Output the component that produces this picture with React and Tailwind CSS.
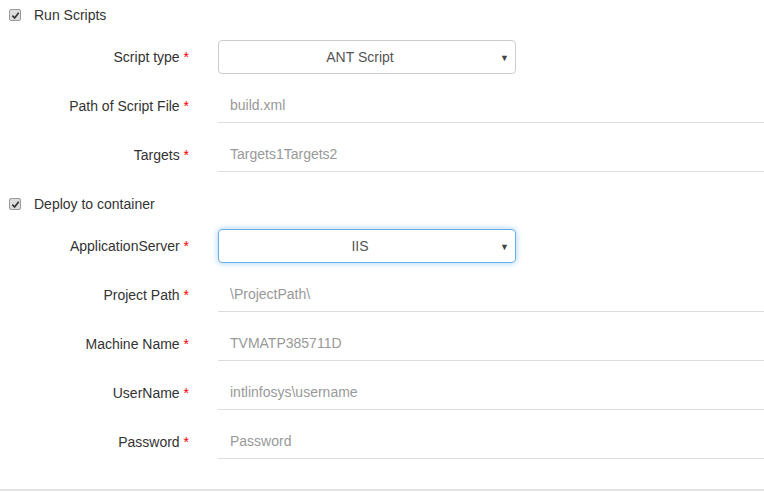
import React from 'react';

const font = { fontFamily: '"Liberation Sans", Arial, sans-serif' };

const CheckRow = ({ label, className = '' }) => (
  <div className={`flex items-center h-[30px] ${className}`}>
    <span className="ml-[9px] w-[12px] h-[12px] rounded-[2px] border border-[#9a9a9a] bg-[#dcdcdc] flex items-center justify-center">
      <svg width="9" height="9" viewBox="0 0 10 10">
        <path d="M1.5 5.2 L4 7.8 L8.6 2" fill="none" stroke="#333" strokeWidth="1.8" />
      </svg>
    </span>
    <span className="ml-[13px] text-[14px] text-[#333]">{label}</span>
  </div>
);

const Label = ({ children }) => (
  <div className="w-[218px] shrink-0 pr-[29px] text-right text-[14px] text-[#333]">
    {children} <span className="text-[#ff0000]">*</span>
  </div>
);

const SelectRow = ({ label, value, focused }) => (
  <div className="flex items-center mb-[15px]">
    <Label>{label}</Label>
    <div
      className={`relative w-[298px] h-[34px] rounded-[4px] border flex items-center justify-center pr-[14px] text-[14px] text-[#555] ${
        focused ? 'border-[#66afe9] shadow-[0_0_6px_rgba(102,175,233,0.6)]' : 'border-[#ccc]'
      }`}
    >
      {value}
      <span className="absolute right-[6px] top-[11px] text-[9px] text-[#444]">▼</span>
    </div>
  </div>
);

const InputRow = ({ label, placeholder }) => (
  <div className="flex items-center mb-[15px]">
    <Label>{label}</Label>
    <div className="flex-1 h-[34px] border-b border-[#ddd] flex items-center pl-[12px] text-[14px] text-[#999]">
      <span>{placeholder}</span>
    </div>
  </div>
);

export default function App() {
  return (
    <div className="w-[764px] h-[493px] bg-white overflow-hidden" style={font}>
      <CheckRow label="Run Scripts" className="mb-[10px]" />
      <SelectRow label="Script type" value="ANT Script" />
      <InputRow label="Path of Script File" placeholder="build.xml" />
      <InputRow label="Targets" placeholder="Targets1Targets2" />

      <CheckRow label="Deploy to container" className="mt-[17px] mb-[10px]" />
      <SelectRow label="ApplicationServer" value="IIS" focused />
      <InputRow label="Project Path" placeholder={'\\ProjectPath\\'} />
      <InputRow label="Machine Name" placeholder="TVMATP385711D" />
      <InputRow label="UserName" placeholder={'intlinfosys\\username'} />
      <InputRow label="Password" placeholder="Password" />

      <div className="mt-[30px] h-[2px] bg-[#e3e3e3]" />
    </div>
  );
}
